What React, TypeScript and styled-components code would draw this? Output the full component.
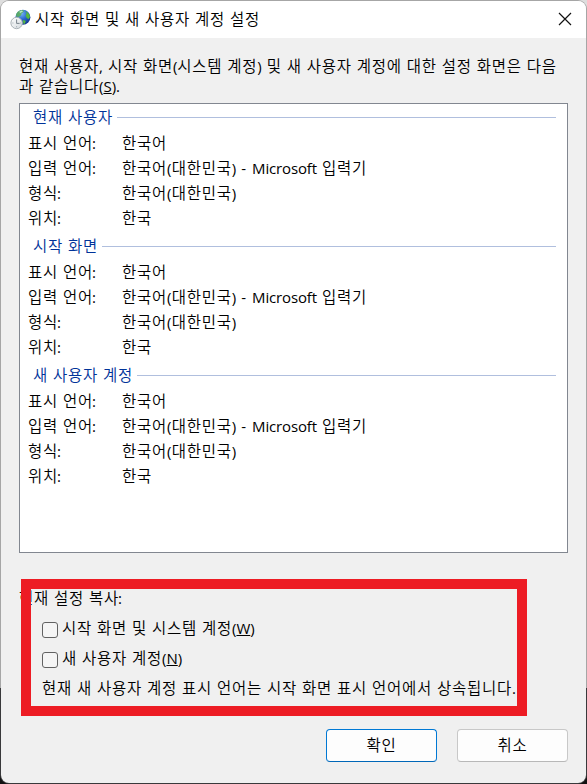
import React from 'react';
import styled, { createGlobalStyle } from 'styled-components';

const GlobalStyle = createGlobalStyle`
  * { box-sizing: border-box; }
  body {
    margin: 0;
    background: linear-gradient(#dedede 0 688px, #111 688px);
    color: #000;
    font: 350 15.5px/20px 'Noto Sans CJK KR', sans-serif;
    letter-spacing: 0.74px;
    word-spacing: 0.8px;
  }
`;

const Frame = styled.div`
  width: 587px;
  height: 784px;
  padding: 1px;
  border-radius: 9px;
  background: linear-gradient(#a6a6a6 0 688px, #39393b 688px);
`;

const Dialog = styled.main`
  position: relative;
  height: 782px;
  border-radius: 8px;
  overflow: hidden;
  background: #f0f0f0;
`;

const TitleBar = styled.header`
  height: 37px;
  display: flex;
  align-items: center;
  padding: 0 14px 0 9px;
  background: #fff;
`;

const Title = styled.h1`
  flex: 1;
  margin: 0 0 4px 4px;
  font: inherit;
`;

const CloseButton = styled.button`
  display: flex;
  padding: 0 0 1px;
  border: 0;
  background: none;
`;

const Content = styled.div`
  padding: 17px 18px 0;
`;

const Intro = styled.p`
  height: 40px;
  margin: 0 0 8px;
  white-space: nowrap;
`;

const Latin = styled.span<{ $spacing?: number }>`
  font-family: 'Open Sans', 'Noto Sans CJK KR', sans-serif;
  font-weight: 400;
  font-size: 15px;
  line-height: 0;
  letter-spacing: ${(p) => p.$spacing ?? 0}px;
`;

const Colon = styled(Latin)`
  margin-left: -1px;
`;

const Product = styled(Latin)`
  margin-left: 1px;
  letter-spacing: -0.15px;
`;

const Settings = styled.section`
  height: 450px;
  padding: 3px 11px 0 8px;
  border: 1px solid #828790;
  background: #fff;
`;

const Group = styled.div`
  height: 129px;
`;

const GroupTitle = styled.h2`
  display: flex;
  align-items: center;
  gap: 4px;
  height: 20px;
  margin: 0 0 3px 5px;
  color: #003399;
  font: inherit;
  line-height: 18px;

  &::after {
    content: '';
    flex: 1;
    height: 1px;
    background: #b0bfde;
  }
`;

const GroupName = styled.span`
  padding-bottom: 2px;
`;

const Row = styled.div`
  display: grid;
  grid-template-columns: 94px 1fr;
  align-items: center;
  height: 25px;
  padding-bottom: 2px;
`;

const CopyArea = styled.section`
  margin-top: 34px;
  height: 117px;
`;

const CopyTitle = styled.div`
  height: 20px;
`;

const Option = styled.label`
  display: flex;
  align-items: center;
  height: 20px;
  margin: 10px 0 0 23px;
`;

const Checkbox = styled.input`
  appearance: none;
  width: 16px;
  height: 16px;
  margin: 5px 4px 0 0;
  border: 1px solid #626262;
  border-radius: 3px;
  background: #f5f5f5;
`;

const Note = styled.p`
  margin: 10px 0 0 23px;
  white-space: nowrap;
`;

const Highlight = styled.div`
  position: absolute;
  left: 20px;
  top: 578px;
  width: 506px;
  height: 137px;
  border: 10px solid #ed1c24;
  pointer-events: none;
`;

const Actions = styled.footer`
  display: flex;
  justify-content: flex-end;
  gap: 20px;
  margin-top: 25px;
`;

const Button = styled.button<{ $primary?: boolean }>`
  width: 111px;
  height: 33px;
  padding: 0 0 3px;
  border: 1px solid ${(p) => (p.$primary ? '#0078d4' : '#c8c8c8')};
  border-bottom-color: ${(p) => (p.$primary ? '#0067b8' : '#b8b8b8')};
  border-radius: 4px;
  background: #fdfdfd;
  color: #000;
  font: inherit;
  letter-spacing: inherit;
`;

const RegionIcon = () => (
  <svg width="21" height="21" viewBox="0 0 21 21">
    <defs>
      <radialGradient id="sea" cx=".4" cy=".25" r=".8">
        <stop offset="0" stopColor="#78b9f4" />
        <stop offset=".5" stopColor="#2866ce" />
        <stop offset="1" stopColor="#12308a" />
      </radialGradient>
      <linearGradient id="face" x1="0" y1="0" x2="1" y2="1">
        <stop offset="0" stopColor="#ffffff" />
        <stop offset="1" stopColor="#d3d9dd" />
      </linearGradient>
    </defs>
    <circle cx="12.9" cy="8.2" r="7.5" fill="url(#sea)" />
    <path d="M6.2 5C7.5 2.2 10 .9 13 1l1 1.5-2.3 1.8L11 6.5 8.5 8 6 7.5Z" fill="#5caf55" opacity=".85" />
    <path d="M15.2 2.2C18 3 19.6 5 20 8l-1.6 2.2-2-1.6-.8-2.5 1.2-1.6ZM12.8 11l3 .8-.8 2.8-1.5.4Z" fill="#55b83e" />
    <path d="m9.2 2.8 2.6-1.2 1.2.8-2.8 1.5Z" fill="#b9e5cf" />
    <circle cx="6.6" cy="14" r="5.7" fill="url(#face)" stroke="#a9b1b6" />
    <path d="M6.6 10.4v4h3" fill="none" stroke="#6b7780" strokeWidth=".9" />
    <path d="M6.6 17.3v1M2.4 14h1M10.1 14h.8" stroke="#84919a" strokeWidth=".8" />
  </svg>
);

const groups = ['현재 사용자', '시작 화면', '새 사용자 계정'];

const Mnemonic = ({ letter }: { letter: string }) => (
  <Latin>
    (<u>{letter}</u>)
  </Latin>
);

const RegionName = () => (
  <>
    한국어<Latin $spacing={0.2}>(</Latin>대한민국<Latin $spacing={0.2}>)</Latin>
  </>
);

export default function App() {
  return (
    <Frame>
      <GlobalStyle />
      <Dialog>
        <TitleBar>
          <RegionIcon />
          <Title>시작 화면 및 새 사용자 계정 설정</Title>
          <CloseButton aria-label="닫기">
            <svg width="14" height="14" viewBox="0 0 14 14">
              <path d="m1 1 12 12M13 1 1 13" stroke="#111" strokeWidth="1.2" />
            </svg>
          </CloseButton>
        </TitleBar>
        <Content>
          <Intro>
            현재 사용자<Latin>,</Latin> 시작 화면<Latin>(</Latin>시스템 계정<Latin>)</Latin> 및 새 사용자 계정에 대한 설정 화면은 다음
            <br />
            과 같습니다<Mnemonic letter="S" /><Latin>.</Latin>
          </Intro>
          <Settings>
            {groups.map((name) => (
              <Group key={name}>
                <GroupTitle><GroupName>{name}</GroupName></GroupTitle>
                <Row><span>표시 언어<Colon>:</Colon></span><span>한국어</span></Row>
                <Row>
                  <span>입력 언어<Colon>:</Colon></span>
                  <span><RegionName /> <Latin>-</Latin> <Product>Microsoft</Product> 입력기</span>
                </Row>
                <Row><span>형식<Colon>:</Colon></span><span><RegionName /></span></Row>
                <Row><span>위치<Colon>:</Colon></span><span>한국</span></Row>
              </Group>
            ))}
          </Settings>
          <CopyArea>
            <CopyTitle>현재 설정 복사<Colon>:</Colon></CopyTitle>
            <Option>
              <Checkbox type="checkbox" />
              <span>시작 화면 및 시스템 계정<Mnemonic letter="W" /></span>
            </Option>
            <Option>
              <Checkbox type="checkbox" />
              <span>새 사용자 계정<Mnemonic letter="N" /></span>
            </Option>
            <Note>현재 새 사용자 계정 표시 언어는 시작 화면 표시 언어에서 상속됩니다<Latin>.</Latin></Note>
          </CopyArea>
          <Actions>
            <Button $primary>확인</Button>
            <Button>취소</Button>
          </Actions>
        </Content>
        <Highlight />
      </Dialog>
    </Frame>
  );
}
